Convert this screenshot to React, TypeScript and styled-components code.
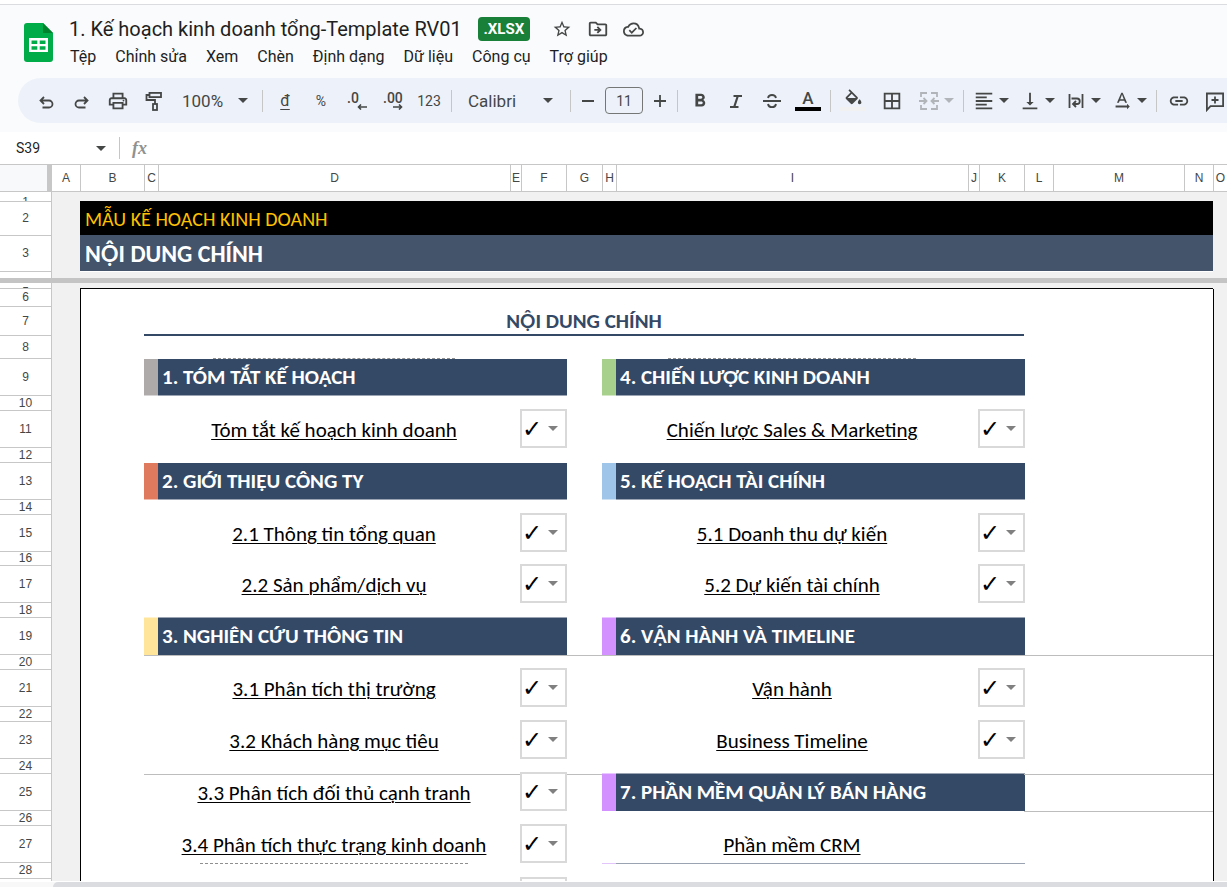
import React from "react";
import styled, { createGlobalStyle } from "styled-components";
import {
  MdBorderAll,
  MdFormatAlignLeft,
  MdFormatBold,
  MdOutlineAddComment,
  MdOutlineCloudDone,
  MdOutlineDriveFileMove,
  MdOutlineInsertLink,
  MdOutlinePrint,
  MdStarBorder,
  MdTextRotationNone,
  MdVerticalAlignBottom,
} from "react-icons/md";

const ui = `Roboto, "Liberation Sans", sans-serif`;
const sheetFont = `Carlito, Lato, sans-serif`;
const ink = "#444746";
const grid = "#c7c7c7";
const navy = "#344966";

const GlobalStyle = createGlobalStyle`
  * { box-sizing: border-box; }
  body { margin: 0; background: #fff; color: #1f1f1f; font-family: ${ui}; }
  button, input, select { font: inherit; color: inherit; margin: 0; padding: 0; border: 0; background: none; }
`;

const Page = styled.div`
  display: flex;
  flex-direction: column;
  height: 100vh;
  overflow: hidden;
`;

const Chrome = styled.header`
  margin-top: 4px;
  padding-bottom: 9px;
  border-top: 1px solid #dadce0;
  background: #f9fbfd;
`;

const TopBar = styled.div`
  display: flex;
  gap: 12px;
  height: 73px;
  padding: 10px 0 0 24px;
`;

const Logo = styled.svg`
  width: 29px;
  height: 39px;
  margin-top: 8px;
`;

const TitleBlock = styled.div`
  display: flex;
  flex-direction: column;
`;

const TitleRow = styled.div`
  display: flex;
  align-items: center;
  height: 28px;
  padding-left: 4px;
`;

const DocTitle = styled.h1`
  margin: 0 16px 0 0;
  font-size: 20px;
  font-weight: 400;
  line-height: 24px;
  white-space: nowrap;
`;

const Badge = styled.span`
  width: 52px;
  border-radius: 4px;
  background: #188038;
  color: #fff;
  font-size: 15px;
  font-weight: 700;
  line-height: 24px;
  text-align: center;
  margin-right: 14px;
`;

const IconButton = styled.button<{ $wide?: boolean }>`
  display: flex;
  flex: none;
  align-items: center;
  justify-content: center;
  width: ${(p) => (p.$wide ? 42 : 36)}px;
  height: 32px;
  color: ${ink};
  font-size: 22px;
`;

const MenuBar = styled.nav`
  display: flex;
  height: 28px;
  align-items: center;
`;

const MenuItem = styled.button`
  padding: 0 9px 0 10px;
  font-size: 16px;
  line-height: 24px;
  white-space: nowrap;
  &:first-child {
    padding-left: 5px;
  }
`;

const Toolbar = styled.div`
  display: flex;
  align-items: center;
  height: 45px;
  margin-left: 18px;
  padding-left: 10px;
  overflow: hidden;
  border-radius: 23px 0 0 23px;
  background: #edf2fa;
  color: ${ink};
`;

const Divider = styled.span`
  flex: none;
  width: 1px;
  height: 22px;
  margin: 0 4px;
  background: #c4c7c5;
`;

const TextButton = styled(IconButton)`
  font-size: 14px;
`;

const Dropdown = styled.button<{ $width: number; $left: number; $right: number }>`
  display: flex;
  flex: none;
  align-items: center;
  justify-content: space-between;
  width: ${(p) => p.$width}px;
  height: 32px;
  padding: 0 ${(p) => p.$right}px 0 ${(p) => p.$left}px;
  font-size: 17px;
`;

const Combo = styled.button<{ $faded?: boolean }>`
  display: flex;
  flex: none;
  align-items: center;
  gap: 4px;
  width: 46px;
  height: 32px;
  padding-left: 5px;
  color: ${ink};
  font-size: 22px;
  opacity: ${(p) => (p.$faded ? 0.35 : 1)};
`;

const CaretShape = styled.svg`
  flex: none;
  width: 10px;
  height: 5px;
  fill: currentColor;
`;

const SizeInput = styled.input`
  flex: none;
  width: 38px;
  height: 27px;
  margin: 0 4px;
  border: 1px solid #747775;
  border-radius: 4px;
  font-size: 14px;
  text-align: center;
`;

const StepButton = styled(IconButton)`
  width: 26px;
`;

const Swatch = styled.span<{ $color: string }>`
  display: flex;
  flex-direction: column;
  align-items: center;
  justify-content: flex-end;
  width: 26px;
  height: 20px;
  border-bottom: 4px solid ${(p) => p.$color};
`;

const SwatchLetter = styled.span`
  font-size: 17px;
  font-weight: 500;
  line-height: 18px;
`;

const BucketIcon = styled.svg`
  flex: none;
  width: 21px;
  height: 18px;
  fill: currentColor;
`;

const Decimals = styled.span`
  display: flex;
  flex-direction: column;
  width: 20px;
  font-size: 14px;
  font-weight: 500;
  line-height: 12px;
  text-align: left;
  svg {
    align-self: flex-end;
    width: 10px;
    height: 6px;
  }
`;

const Currency = styled.span`
  font-size: 16px;
  text-decoration: underline;
  text-underline-offset: 3px;
`;

const FormulaBar = styled.div`
  display: flex;
  align-items: center;
  flex: none;
  height: 32px;
  padding-left: 16px;
  color: ${ink};
`;

const NameBox = styled.input`
  width: 80px;
  font-size: 14px;
  color: #1f1f1f;
`;

const NameCaret = styled.button`
  display: flex;
  justify-content: center;
  width: 10px;
  margin-right: 9px;
`;

const Fx = styled.span`
  margin-left: 8px;
  color: #8f9291;
  font-family: "Liberation Serif", serif;
  font-size: 18px;
  font-style: italic;
  font-weight: 700;
`;

const FormulaInput = styled.input`
  flex: 1;
  min-width: 0;
`;

const SheetView = styled.main`
  flex: 1;
  min-height: 0;
  overflow: hidden;
  border-top: 1px solid ${grid};
`;

const Sheet = styled.table`
  width: 100%;
  min-width: 1227px;
  table-layout: fixed;
  border-spacing: 0;
  font-family: ${sheetFont};
  th,
  td {
    padding: 0;
  }
`;

const Col = styled.col<{ $w?: number }>`
  width: ${(p) => (p.$w ? `${p.$w}px` : "auto")};
`;

const Corner = styled.td`
  height: 27px;
  border-right: 5px solid ${grid};
  border-bottom: 1px solid ${grid};
  background: #f8f9fa;
`;

const ColumnHead = styled.th`
  height: 27px;
  border-bottom: 1px solid ${grid};
  border-left: 1px solid ${grid};
  color: ${ink};
  font-family: "Liberation Sans", sans-serif;
  font-size: 12px;
  font-weight: 400;
  &:nth-child(2) {
    border-left: 0;
  }
`;

const RowHead = styled.th<{ $h: number; $open?: boolean }>`
  height: ${(p) => p.$h}px;
  border-right: 1px solid ${grid};
  border-bottom: ${(p) => (p.$open ? "0" : `1px solid ${grid}`)};
  color: ${ink};
  font-family: "Liberation Sans", sans-serif;
  font-size: 12px;
  font-weight: 400;
`;

const RowNumber = styled.div<{ $h: number; $line: number }>`
  height: ${(p) => p.$h}px;
  overflow: hidden;
  line-height: ${(p) => p.$line}px;
`;

const Outside = styled.td<{ $edge?: boolean; $floor?: boolean }>`
  background: #f1f1f1;
  border-left: ${(p) => (p.$edge ? "1px solid #000" : "0")};
  border-bottom: ${(p) => (p.$floor ? "1px solid #000" : "0")};
`;

const Margin = styled.td`
  border-left: 1px solid #000;
`;

const Space = styled.td<{ $ruled?: boolean }>`
  border-top: ${(p) => (p.$ruled ? "1px solid #bdbdbd" : "0")};
`;

const Banner = styled.div<{ $main?: boolean }>`
  height: ${(p) => (p.$main ? 36 : 34)}px;
  margin: -1px 0 1px;
  padding: 1px 0 0 5px;
  background: ${(p) => (p.$main ? "#44546a" : "#000")};
  color: ${(p) => (p.$main ? "#fff" : "#ffc000")};
  font-size: ${(p) => (p.$main ? 24 : 20)}px;
  font-weight: ${(p) => (p.$main ? 700 : 400)};
  line-height: ${(p) => (p.$main ? 36 : 34)}px;
`;

const FreezeBar = styled.td`
  height: 5px;
  background: #c4c4c4;
`;

const Contents = styled.td`
  border-bottom: 2px solid ${navy};
  color: ${navy};
  font-size: 21px;
  font-weight: 700;
  line-height: 26px;
  text-align: center;
`;

const Stripe = styled.div<{ $color: string; $raised?: boolean }>`
  height: ${(p) => (p.$raised ? 38 : 37)}px;
  margin-top: ${(p) => (p.$raised ? -1 : 0)}px;
  border-top: ${(p) => (p.$raised ? "1px solid rgba(255, 255, 255, 0.5)" : "0")};
  border-bottom: ${(p) => (p.$raised ? "0" : "1px solid rgba(255, 255, 255, 0.5)")};
  background: ${(p) => p.$color};
`;

const SectionTitle = styled(Stripe)`
  margin-right: -1px;
  padding-left: 4px;
  color: #fff;
  font-size: 21px;
  font-weight: 700;
  line-height: 37px;
  white-space: nowrap;
`;

/* Carlito Bold lacks the circumflex on Ộ and Ậ, so those letters use Lato. */
const StackedLetter = styled.span<{ $size: number }>`
  font-family: Lato, sans-serif;
  font-size: ${(p) => p.$size}px;
  line-height: 1;
`;

const LinkCell = styled.td<{ $ruled?: boolean }>`
  border-top: ${(p) => (p.$ruled ? "1px solid #bdbdbd" : "0")};
  font-size: 21px;
  line-height: 26px;
  text-align: center;
  a {
    color: #000;
    text-decoration: underline;
    text-decoration-thickness: 1px;
    text-underline-offset: 2px;
  }
`;

const StatusBox = styled.div`
  position: relative;
  height: 39px;
  margin: -2px -1px 0;
  svg {
    position: absolute;
    top: 17px;
    right: 9px;
    color: #808080;
    pointer-events: none;
  }
`;

const StatusSelect = styled.select`
  display: block;
  width: 100%;
  height: 39px;
  appearance: none;
  border: 2px solid #d9d9d9;
  background: #fff;
  color: #000;
  font-family: "DejaVu Sans", sans-serif;
  font-size: 24px;
`;

const Sliver = styled.div<{ $w: number; $h: number; $drop?: boolean }>`
  display: flex;
  align-items: ${(p) => (p.$drop ? "flex-end" : "flex-start")};
  justify-content: center;
  height: ${(p) => p.$h}px;
  &::before {
    content: "";
    width: ${(p) => p.$w}px;
    border-top: 1px dashed #8f8f8f;
  }
`;

const FaintEdge = styled.div<{ $color: string }>`
  height: 16px;
  margin-right: -1px;
  border-top: 1px solid ${(p) => p.$color};
`;

const ScrollRow = styled.footer`
  display: flex;
  flex: none;
  height: 6px;
  padding-left: 53px;
  border-top: 1px solid #fff;
  background: #f8f8f8;
`;

const ScrollThumb = styled.div`
  flex: 1;
  border-radius: 5px 0 0 0;
  background: #dadce0;
`;

const Caret = () => (
  <CaretShape viewBox="0 0 10 5" aria-hidden>
    <path d="M0 0h10L5 5z" />
  </CaretShape>
);

const Glyph = ({ children, w = 1.8 }: { children: React.ReactNode; w?: number }) => (
  <svg width="22" height="22" viewBox="0 0 22 22" fill="none" stroke="currentColor" strokeWidth={w} aria-hidden>
    {children}
  </svg>
);

const Bold = ({ text, size }: { text: string; size: number }) => (
  <>
    {text.split(/([ỘẬ])/).map((part, i) =>
      i % 2 ? <StackedLetter key={i} $size={size}>{part}</StackedLetter> : part
    )}
  </>
);

const menus = ["Tệp", "Chỉnh sửa", "Xem", "Chèn", "Định dạng", "Dữ liệu", "Công cụ", "Trợ giúp"];

const columns: [string, number?][] = [
  ["A", 28], ["B", 64], ["C", 14], ["D", 352], ["E", 11], ["F", 45], ["G", 36], ["H", 14],
  ["I", 352], ["J", 11], ["K", 45], ["L", 29], ["M", 131], ["N", 29], ["O"],
];

type Entry =
  | { kind: "section"; text: string; color: string; raised?: boolean }
  | { kind: "link"; text: string; ruled?: boolean; status?: boolean }
  | { kind: "sliver"; w: number; h: number; drop?: boolean }
  | { kind: "edge" };

type RowData = { n: number; h: number; left?: Entry; right?: Entry; ruled?: boolean; ruledEnd?: boolean };

const section = (text: string, color: string, raised = false): Entry => ({ kind: "section", text, color, raised });
const link = (text: string, ruled = false, status = true): Entry => ({ kind: "link", text, ruled, status });

const rows: RowData[] = [
  { n: 8, h: 23, left: { kind: "sliver", w: 242, h: 23, drop: true }, right: { kind: "sliver", w: 248, h: 23, drop: true } },
  { n: 9, h: 37, left: section("1. TÓM TẮT KẾ HOẠCH", "#aeaaaa"), right: section("4. CHIẾN LƯỢC KINH DOANH", "#a8d08d") },
  { n: 10, h: 15 },
  { n: 11, h: 37, left: link("Tóm tắt kế hoạch kinh doanh"), right: link("Chiến lược Sales & Marketing") },
  { n: 12, h: 15 },
  { n: 13, h: 37, left: section("2. GIỚI THIỆU CÔNG TY", "#e07a5f"), right: section("5. KẾ HOẠCH TÀI CHÍNH", "#9fc5e8") },
  { n: 14, h: 15 },
  { n: 15, h: 37, left: link("2.1 Thông tin tổng quan"), right: link("5.1 Doanh thu dự kiến") },
  { n: 16, h: 14 },
  { n: 17, h: 37, left: link("2.2 Sản phẩm/dịch vụ"), right: link("5.2 Dự kiến tài chính") },
  { n: 18, h: 15 },
  { n: 19, h: 37, left: section("3. NGHIÊN CỨU THÔNG TIN", "#ffe599", true), right: section("6. VẬN HÀNH VÀ TIMELINE", "#d390ff", true) },
  { n: 20, h: 15, ruled: true, ruledEnd: true },
  { n: 21, h: 37, left: link("3.1 Phân tích thị trường"), right: link("Vận hành") },
  { n: 22, h: 15 },
  { n: 23, h: 37, left: link("3.2 Khách hàng mục tiêu"), right: link("Business Timeline") },
  { n: 24, h: 15 },
  { n: 25, h: 37, ruled: true, ruledEnd: true, left: link("3.3 Phân tích đối thủ cạnh tranh", true), right: section("7. PHẦN MỀM QUẢN LÝ BÁN HÀNG", "#d390ff", true) },
  { n: 26, h: 15, ruledEnd: true },
  { n: 27, h: 37, left: link("3.4 Phân tích thực trạng kinh doanh"), right: link("Phần mềm CRM", false, false) },
  { n: 28, h: 16, left: { kind: "sliver", w: 268, h: 16 }, right: { kind: "edge" } },
  { n: 29, h: 37, left: link("") },
];

const Status = ({ label }: { label: string }) => (
  <StatusBox>
    <StatusSelect aria-label={label} defaultValue="✓">
      <option>✓</option>
      <option value=""></option>
    </StatusSelect>
    <Caret />
  </StatusBox>
);

const Half = ({ entry, ruled }: { entry?: Entry; ruled?: boolean }) => {
  if (!entry) return <Space colSpan={4} $ruled={ruled} />;
  switch (entry.kind) {
    case "section":
      return (
        <>
          <td><Stripe $color={entry.color} $raised={entry.raised} /></td>
          <td colSpan={3}>
            <SectionTitle $color={navy} $raised={entry.raised}><Bold text={entry.text} size={19} /></SectionTitle>
          </td>
        </>
      );
    case "link":
      return (
        <>
          <Space $ruled={entry.ruled} />
          <LinkCell $ruled={entry.ruled}>{entry.text && <a href="#section">{entry.text}</a>}</LinkCell>
          <Space $ruled={entry.ruled} />
          <td>{entry.status && <Status label={entry.text || "Trạng thái"} />}</td>
        </>
      );
    case "sliver":
      return (
        <>
          <td />
          <td><Sliver $w={entry.w} $h={entry.h} $drop={entry.drop} /></td>
          <td colSpan={2} />
        </>
      );
    case "edge":
      return (
        <>
          <td><FaintEdge $color="#e3c4fb" /></td>
          <td colSpan={3}><FaintEdge $color="#99a3b2" /></td>
        </>
      );
  }
};

const Head = ({ n, h, line = h - 1, open }: { n?: number; h: number; line?: number; open?: boolean }) => (
  <RowHead scope="row" $h={h} $open={open}>
    <RowNumber $h={open ? h : h - 1} $line={line}>{n}</RowNumber>
  </RowHead>
);

export default function App() {
  return (
    <Page>
      <GlobalStyle />
      <Chrome>
        <TopBar>
          <Logo viewBox="0 0 29 39" aria-hidden>
            <path d="M3 0h16l10 10v26a3 3 0 0 1-3 3H3a3 3 0 0 1-3-3V3a3 3 0 0 1 3-3z" fill="#00ac47" />
            <path d="M19 0l10 10H19z" fill="#00832d" />
            <path d="M5 15h19v14H5zM7.5 17.5v3.500h5.800v-3.500zM15.700 17.500v3.500h5.800v-3.500zM7.500 23.300v3.400h5.800v-3.400zM15.700 23.300v3.400h5.800v-3.400z" fill="#fff" fillRule="evenodd" />
          </Logo>
          <TitleBlock>
            <TitleRow>
              <DocTitle>1. Kế hoạch kinh doanh tổng-Template RV01</DocTitle>
              <Badge>.XLSX</Badge>
              <IconButton aria-label="Gắn dấu sao"><MdStarBorder size={20} /></IconButton>
              <IconButton aria-label="Di chuyển"><MdOutlineDriveFileMove /></IconButton>
              <IconButton aria-label="Trạng thái lưu"><MdOutlineCloudDone size={21} /></IconButton>
            </TitleRow>
            <MenuBar>
              {menus.map((m) => <MenuItem key={m}>{m}</MenuItem>)}
            </MenuBar>
          </TitleBlock>
        </TopBar>

        <Toolbar role="toolbar">
          <IconButton aria-label="Hủy"><Glyph><path d="M9 7L5.500 10.500 9 14M6 10.500h8a3.500 3.500 0 0 1 0 7H7.500" /></Glyph></IconButton>
          <IconButton aria-label="Làm lại"><Glyph><path d="M13 7l3.500 3.500L13 14M16 10.500H8a3.500 3.500 0 0 0 0 7h6.500" /></Glyph></IconButton>
          <IconButton aria-label="In"><MdOutlinePrint /></IconButton>
          <IconButton aria-label="Sao chép định dạng">
            <Glyph>
              <rect x="6.5" y="2.900" width="11.500" height="4.200" />
              <path d="M6.500 5H3.500v5h8.500v4" />
              <rect x="10" y="14" width="4" height="6" />
            </Glyph>
          </IconButton>
          <Dropdown $width={86} $left={10} $right={10}>100%<Caret /></Dropdown>
          <Divider />
          <TextButton aria-label="Tiền tệ"><Currency>đ</Currency></TextButton>
          <TextButton>%</TextButton>
          <TextButton aria-label="Giảm số thập phân">
            <Decimals>.0<svg viewBox="0 0 10 6" fill="none" stroke="currentColor" strokeWidth="1.6"><path d="M10 3H1.500M4 .5L1.500 3 4 5.500" /></svg></Decimals>
          </TextButton>
          <TextButton aria-label="Tăng số thập phân">
            <Decimals>.00<svg viewBox="0 0 10 6" fill="none" stroke="currentColor" strokeWidth="1.6"><path d="M0 3h8.500M6 .5L8.500 3 6 5.500" /></svg></Decimals>
          </TextButton>
          <TextButton>123</TextButton>
          <Divider />
          <Dropdown $width={110} $left={12} $right={13}>Calibri<Caret /></Dropdown>
          <Divider />
          <StepButton aria-label="Giảm cỡ chữ"><Glyph><path d="M5 11h12" /></Glyph></StepButton>
          <SizeInput aria-label="Cỡ chữ" defaultValue="11" />
          <StepButton aria-label="Tăng cỡ chữ"><Glyph><path d="M5 11h12M11 5v12" /></Glyph></StepButton>
          <Divider />
          <IconButton aria-label="Đậm"><MdFormatBold /></IconButton>
          <IconButton aria-label="Nghiêng"><Glyph w={2.2}><path d="M8.500 6h8.500M5 17h8.500M12.800 6l-3.600 11" /></Glyph></IconButton>
          <IconButton aria-label="Gạch ngang">
            <Glyph><path d="M2 11h18M15 8c-.4-1.900-1.900-3-4-3S7.400 6.100 7 8M7 14c.3 2 1.800 3.200 4 3.200s3.700-1.200 4-3.200" /></Glyph>
          </IconButton>
          <IconButton aria-label="Màu văn bản"><Swatch $color="#000"><SwatchLetter>A</SwatchLetter></Swatch></IconButton>
          <Divider />
          <IconButton aria-label="Màu nền">
            <Swatch $color="#f1f1f1">
              <BucketIcon viewBox="0 0 24 20" aria-hidden>
                <path d="M16.560 8.940L7.620 0 6.210 1.410l2.380 2.380-5.150 5.150c-.59.59-.59 1.540 0 2.120l5.500 5.500c.29.29.68.44 1.060.44s.77-.15 1.060-.44l5.500-5.500c.59-.58.59-1.530 0-2.120zM5.210 10L10 5.210 14.790 10H5.210zM19 11.500s-2 2.170-2 3.500c0 1.100.9 2 2 2s2-.9 2-2c0-1.330-2-3.500-2-3.500z" />
              </BucketIcon>
            </Swatch>
          </IconButton>
          <IconButton $wide aria-label="Đường viền"><MdBorderAll /></IconButton>
          <Combo $faded aria-label="Hợp nhất ô">
            <Glyph><path d="M9 3H3v4M13 3h6v4M9 19H3v-4M13 19h6v-4M1 11h7M5.500 8L8.500 11l-3 3M21 11h-7M16.500 8l-3 3 3 3" /></Glyph>
            <Caret />
          </Combo>
          <Divider />
          <Combo aria-label="Căn ngang"><MdFormatAlignLeft /><Caret /></Combo>
          <Combo aria-label="Căn dọc"><MdVerticalAlignBottom /><Caret /></Combo>
          <Combo aria-label="Xuống dòng">
            <Glyph><path d="M4.500 4v14M17.500 4v14M6.500 8.500h5.500a2.700 2.700 0 0 1 0 5.500H8.500M11 11l-3 3 3 3" /></Glyph>
            <Caret />
          </Combo>
          <Combo aria-label="Xoay văn bản"><MdTextRotationNone /><Caret /></Combo>
          <Divider />
          <IconButton aria-label="Chèn đường liên kết"><MdOutlineInsertLink /></IconButton>
          <IconButton aria-label="Chèn nhận xét">
            <Glyph><path d="M2.900 20V3.500h16.200v12.600H6.500zM11 6.500v7M7.500 10h7" /></Glyph>
          </IconButton>
        </Toolbar>
      </Chrome>

      <FormulaBar>
        <NameBox aria-label="Hộp tên" defaultValue="S39" />
        <NameCaret aria-label="Mở hộp tên"><Caret /></NameCaret>
        <Divider />
        <Fx>fx</Fx>
        <FormulaInput aria-label="Công thức" />
      </FormulaBar>

      <SheetView>
        <Sheet>
          <colgroup>
            <Col $w={52} />
            {columns.map(([name, w]) => <Col key={name} $w={w} />)}
          </colgroup>
          <thead>
            <tr>
              <Corner />
              {columns.map(([name]) => <ColumnHead key={name} scope="col">{name}</ColumnHead>)}
            </tr>
          </thead>
          <tbody>
            <tr><Head n={1} h={10} line={20} /><Outside colSpan={15} /></tr>
            <tr>
              <Head n={2} h={34} />
              <Outside />
              <td colSpan={13}><Banner>MẪU KẾ HOẠCH KINH DOANH</Banner></td>
              <Outside />
            </tr>
            <tr>
              <Head n={3} h={36} />
              <Outside />
              <td colSpan={13}><Banner $main><Bold text="NỘI DUNG CHÍNH" size={22} /></Banner></td>
              <Outside />
            </tr>
            <tr><Head h={6} open /><Outside colSpan={15} /></tr>
            <tr><FreezeBar colSpan={16} /></tr>
            <tr>
              <Head n={5} h={6} line={18} />
              <Outside />
              <Outside colSpan={13} $floor />
              <Outside />
            </tr>
            <tr>
              <Head n={6} h={18} />
              <Outside /><Margin /><td colSpan={12} /><Outside $edge />
            </tr>
            <tr>
              <Head n={7} h={29} />
              <Outside /><Margin />
              <Contents colSpan={9}><Bold text="NỘI DUNG CHÍNH" size={19} /></Contents>
              <td colSpan={3} />
              <Outside $edge />
            </tr>
            {rows.map((r) => (
              <tr key={r.n}>
                <Head n={r.n} h={r.h} />
                <Outside />
                <Margin />
                <Half entry={r.left} ruled={r.ruled} />
                <Space $ruled={r.ruled} />
                <Half entry={r.right} ruled={r.ruled} />
                <Space colSpan={3} $ruled={r.ruledEnd} />
                <Outside $edge />
              </tr>
            ))}
          </tbody>
        </Sheet>
      </SheetView>
      <ScrollRow><ScrollThumb /></ScrollRow>
    </Page>
  );
}
